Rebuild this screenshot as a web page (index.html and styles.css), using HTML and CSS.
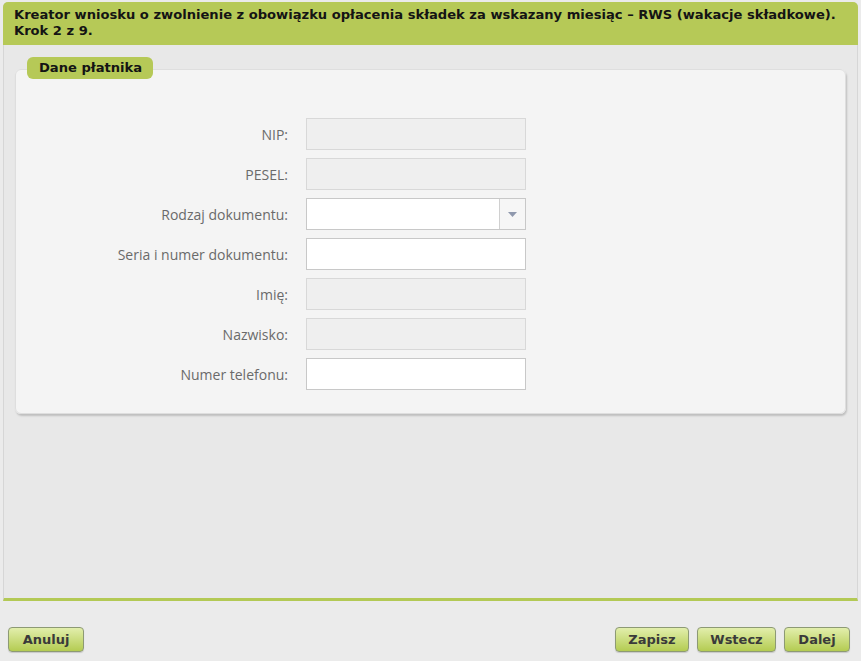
FILE: index.html
```html
<!DOCTYPE html>
<html lang="pl">
<head>
<meta charset="utf-8">
<title>Kreator wniosku RWS</title>
<link rel="stylesheet" href="styles.css">
</head>
<body>
<div class="wizard">
  <div class="panel">
    <div class="panel-header">Kreator wniosku o zwolnienie z obowiązku opłacenia składek za wskazany miesiąc – RWS (wakacje składkowe).<br>Krok 2 z 9.</div>
    <div class="panel-body">
      <fieldset class="card">
        <legend class="card-legend">Dane płatnika</legend>
        <div class="form">
          <label class="label">NIP:</label>
          <div class="input disabled"></div>
          <label class="label">PESEL:</label>
          <div class="input disabled"></div>
          <label class="label">Rodzaj dokumentu:</label>
          <div class="input select"><span class="select-btn"><svg width="9" height="5" viewBox="0 0 9 5"><path d="M0 0h9L4.5 5z" fill="#8f98ad"/></svg></span></div>
          <label class="label">Seria i numer dokumentu:</label>
          <div class="input"></div>
          <label class="label">Imię:</label>
          <div class="input disabled"></div>
          <label class="label">Nazwisko:</label>
          <div class="input disabled"></div>
          <label class="label">Numer telefonu:</label>
          <div class="input"></div>
        </div>
      </fieldset>
    </div>
  </div>
  <div class="toolbar">
    <button class="btn">Anuluj</button>
    <div class="toolbar-right">
      <button class="btn">Zapisz</button>
      <button class="btn">Wstecz</button>
      <button class="btn">Dalej</button>
    </div>
  </div>
</div>
</body>
</html>
```

FILE: styles.css
```css
html, body {
  margin: 0;
  padding: 0;
  background: #ebebeb;
}
body {
  font-family: "DejaVu Sans", Tahoma, sans-serif;
  width: 861px;
  height: 661px;
  overflow: hidden;
}
.wizard {
  padding: 2px 3px 0 3px;
}
.panel {
  height: 596px;
  background: #e8e8e8;
  border: 1px solid #d6d6d6;
  border-top: none;
  border-bottom: 3px solid #b3c955;
  border-radius: 5px 5px 0 0;
  display: flex;
  flex-direction: column;
}
.panel-header {
  background: #b6c957;
  color: #141414;
  font-weight: bold;
  font-size: 13.1px;
  line-height: 16px;
  padding: 5px 8px 3px 11px;
  height: 35px;
  border-radius: 5px 5px 0 0;
  margin: 0 -1px;
  white-space: nowrap;
}
.panel-body {
  padding: 12px 11px 0 11px;
}
.card {
  margin: 0;
  position: relative;
  background: #f4f4f4;
  border: 1px solid #dedede;
  border-radius: 6px;
  box-shadow: 1px 2px 2px rgba(0,0,0,0.18);
  padding: 0 0 23px 0;
  margin-top: 12px;
}
.card-legend {
  position: absolute;
  top: -13px;
  left: 11px;
  background: #b6c957;
  color: #141414;
  font-weight: bold;
  font-size: 13.1px;
  line-height: 22px;
  height: 22px;
  padding: 0 11px 0 12px;
  border-radius: 6px;
}
.form {
  display: grid;
  grid-template-columns: 272px 220px;
  column-gap: 18px;
  row-gap: 8px;
  align-items: center;
  padding-top: 48px;
  font-family: "Open Sans", "Noto Sans", sans-serif;
}
.label {
  text-align: right;
  color: #6a6a6a;
  font-size: 14px;
}
.input {
  height: 30px;
  background: #ffffff;
  border: 1px solid #c8c8c8;
  position: relative;
}
.input.disabled {
  background: #efefef;
  border-color: #d8d8d8;
}
.select .select-btn {
  position: absolute;
  right: 0;
  top: 0;
  bottom: 0;
  width: 25px;
  border-left: 1px solid #d0d0d0;
  background: #f6f6f6;
  display: flex;
  align-items: center;
  justify-content: center;
}
.toolbar {
  display: flex;
  justify-content: space-between;
  padding: 26px 8px 0 5px;
}
.toolbar-right {
  display: flex;
  gap: 8px;
}
.btn {
  height: 25px;
  padding: 0;
  font-family: "DejaVu Sans", Tahoma, sans-serif;
  font-weight: bold;
  font-size: 13px;
  color: #3a3a3a;
  background: linear-gradient(#e2eeac, #b4cc52);
  border: 1px solid #8d9a74;
  border-radius: 4px;
  box-shadow: 0 1px 1px rgba(0,0,0,0.15);
  cursor: pointer;
}
.toolbar > .btn { width: 76px; }
.toolbar-right .btn:nth-child(1) { width: 74px; }
.toolbar-right .btn:nth-child(2) { width: 79px; }
.toolbar-right .btn:nth-child(3) { width: 66px; }
```
